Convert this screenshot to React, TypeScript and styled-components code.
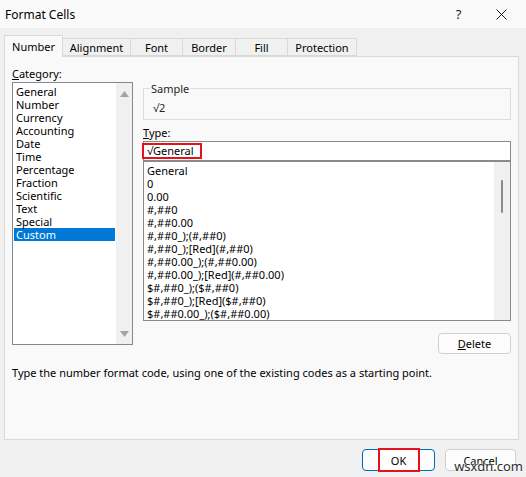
import styled, {createGlobalStyle} from "styled-components";

const GlobalStyle = createGlobalStyle`
    html, body {
        margin: 0;
        padding: 0;
        background: #f0f0f0;
    }
`

const categories = [
    'General', 'Number', 'Currency', 'Accounting', 'Date', 'Time',
    'Percentage', 'Fraction', 'Scientific', 'Text', 'Special', 'Custom',
]

const formats = [
    'General',
    '0',
    '0.00',
    '#,##0',
    '#,##0.00',
    '#,##0_);(#,##0)',
    '#,##0_);[Red](#,##0)',
    '#,##0.00_);(#,##0.00)',
    '#,##0.00_);[Red](#,##0.00)',
    '$#,##0_);($#,##0)',
    '$#,##0_);[Red]($#,##0)',
    '$#,##0.00_);($#,##0.00)',
]

const tabs = [
    {name: 'Number', width: 59},
    {name: 'Alignment', width: 69},
    {name: 'Font', width: 53},
    {name: 'Border', width: 54},
    {name: 'Fill', width: 53},
    {name: 'Protection', width: 70},
]

const Arrow = ({down}: { down?: boolean }) => (
    <svg width="9" height="6" viewBox="0 0 9 6">
        <path d={down ? 'M0 0 L9 0 L4.5 6 Z' : 'M0 6 L9 6 L4.5 0 Z'} fill="#a3a3a3"/>
    </svg>
)

const App = () => {
    return (
        <>
            <GlobalStyle/>
            <Window>
                <TitleBar>
                    <Title>Format Cells</Title>
                    <TitleButton>?</TitleButton>
                    <TitleButton>
                        <svg width="11" height="11" viewBox="0 0 11 11">
                            <path d="M0.5 0.5 L10.5 10.5 M10.5 0.5 L0.5 10.5" stroke="#1a1a1a" strokeWidth="1"/>
                        </svg>
                    </TitleButton>
                </TitleBar>

                <TabRow>
                    {tabs.map((t, i) => (
                        <Tab key={t.name} $active={i === 0} $width={t.width}>{t.name}</Tab>
                    ))}
                </TabRow>

                <Panel>
                    <TopRow>
                        <LeftCol>
                            <FieldLabel><u>C</u>ategory:</FieldLabel>
                            <CategoryBox>
                                <Items>
                                    {categories.map(c => (
                                        <Item key={c} $selected={c === 'Custom'}>{c}</Item>
                                    ))}
                                </Items>
                                <ScrollTrack>
                                    <Arrow/>
                                    <Arrow down/>
                                </ScrollTrack>
                            </CategoryBox>
                        </LeftCol>

                        <RightCol>
                            <SampleGroup>
                                <SampleLegend>Sample</SampleLegend>
                                <SampleValue>√2</SampleValue>
                            </SampleGroup>
                            <TypeLabel><u>T</u>ype:</TypeLabel>
                            <TypeInput>
                                <InputText>√General</InputText>
                                <Highlight $width={60} $height={16} $left={-2} $top={1}/>
                            </TypeInput>
                            <FormatBox>
                                <Items>
                                    {formats.map((f, i) => (
                                        <FormatItem key={i}>{f}</FormatItem>
                                    ))}
                                </Items>
                                <FormatTrack>
                                    <Thumb/>
                                </FormatTrack>
                            </FormatBox>
                            <DeleteRow>
                                <Button $width={73} $height={21}><u>D</u>elete</Button>
                            </DeleteRow>
                        </RightCol>
                    </TopRow>
                    <Description>
                        Type the number format code, using one of the existing codes as a starting point.
                    </Description>
                </Panel>

                <Footer>
                    <Button $width={73} $height={22} $primary>
                        OK
                        <Highlight $width={42} $height={24} $left={15} $top={-2}/>
                    </Button>
                    <Button $width={71} $height={22}>Cancel</Button>
                    <Watermark>wsxdn.com</Watermark>
                </Footer>
            </Window>
        </>
    );
};

export default App;

const Window = styled.div`
    position: relative;
    width: 526px;
    height: 477px;
    overflow: hidden;
    display: flex;
    flex-direction: column;
    background: #f0f0f0;
    font-family: "Noto Sans", "Open Sans", sans-serif;
    font-size: 11px;
    color: #000000;
`

const TitleBar = styled.div`
    display: flex;
    align-items: center;
    height: 28px;
    padding-left: 5px;
    background: #fafafa;
`

const Title = styled.div`
    flex-grow: 1;
    font-size: 12px;
`

const TitleButton = styled.div`
    display: flex;
    align-items: center;
    justify-content: center;
    width: 43px;
    height: 28px;
    font-size: 13px;
    color: #1a1a1a;
    &:last-child {
        margin-right: 3px;
    }
`

const TabRow = styled.div`
    display: flex;
    align-items: flex-end;
    height: 21px;
    margin-top: 7px;
    padding-left: 4px;
    position: relative;
    z-index: 1;
`

const Tab = styled.div<{ $active?: boolean; $width: number }>`
    display: flex;
    align-items: center;
    justify-content: center;
    box-sizing: border-box;
    width: ${p => p.$width}px;
    height: ${p => p.$active ? 22 : 18}px;
    margin-left: -1px;
    margin-bottom: ${p => p.$active ? -1 : 0}px;
    padding-bottom: ${p => p.$active ? 1 : 0}px;
    background: ${p => p.$active ? '#f9f9f9' : '#f0f0f0'};
    border: 1px solid #d9d9d9;
    border-bottom: ${p => p.$active ? 'none' : '1px solid #d9d9d9'};
    &:first-child {
        margin-left: 0;
    }
`

const Panel = styled.div`
    box-sizing: border-box;
    height: 384px;
    margin: 0 7px 0 4px;
    padding: 9px 7px 0;
    background: #f9f9f9;
    border: 1px solid #dadada;
`

const TopRow = styled.div`
    display: flex;
    gap: 10px;
`

const LeftCol = styled.div`
    display: flex;
    flex-direction: column;
    width: 121px;
`

const RightCol = styled.div`
    display: flex;
    flex-direction: column;
    flex-grow: 1;
    padding-top: 16px;
`

const FieldLabel = styled.div`
    height: 16px;
    line-height: 16px;
    u {
        text-decoration-thickness: 1px;
    }
`

const CategoryBox = styled.div`
    box-sizing: border-box;
    display: flex;
    height: 263px;
    background: #ffffff;
    border: 1px solid #828790;
`

const Items = styled.div`
    flex-grow: 1;
    padding: 2px 1px 0;
    overflow: hidden;
`

const Item = styled.div<{ $selected?: boolean }>`
    height: 13px;
    line-height: 13px;
    padding-left: 2px;
    white-space: nowrap;
    background: ${p => p.$selected ? '#0078d7' : 'transparent'};
    color: ${p => p.$selected ? '#ffffff' : '#000000'};
`

const ScrollTrack = styled.div`
    display: flex;
    flex-direction: column;
    align-items: center;
    justify-content: space-between;
    width: 16px;
    padding: 8px 0 7px;
    box-sizing: border-box;
    background: #f0f0f0;
`

const SampleGroup = styled.fieldset`
    box-sizing: border-box;
    height: 38px;
    margin: 0;
    padding: 6px 8px 0 9px;
    border: 1px solid #dcdcdc;
`

const SampleLegend = styled.legend`
    margin-left: -3px;
    padding: 0 1px;
    line-height: 13px;
    color: #262626;
`

const SampleValue = styled.div`
    line-height: 14px;
    color: #262626;
`

const TypeLabel = styled(FieldLabel)`
    margin-top: 5px;
`

const TypeInput = styled.div`
    position: relative;
    box-sizing: border-box;
    display: flex;
    align-items: center;
    height: 20px;
    padding-left: 3px;
    background: #ffffff;
    border: 1px solid #8a8a8a;
`

const InputText = styled.span`
    line-height: 14px;
`

const Highlight = styled.span<{ $width: number; $height: number; $left: number; $top: number }>`
    position: absolute;
    left: ${p => p.$left}px;
    top: ${p => p.$top}px;
    width: ${p => p.$width}px;
    height: ${p => p.$height}px;
    box-sizing: border-box;
    border: 2px solid #e3121c;
    pointer-events: none;
`

const FormatBox = styled.div`
    box-sizing: border-box;
    display: flex;
    height: 160px;
    background: #ffffff;
    border: 1px solid #8a8a8a;
`

const FormatItem = styled.div`
    height: 13px;
    line-height: 13px;
    padding-left: 2px;
    white-space: nowrap;
`

const FormatTrack = styled.div`
    display: flex;
    justify-content: center;
    width: 16px;
    padding-top: 18px;
    box-sizing: border-box;
    background: #f0f0f0;
`

const Thumb = styled.div`
    width: 2px;
    height: 33px;
    border-radius: 1px;
    background: #8a8a8a;
`

const DeleteRow = styled.div`
    display: flex;
    justify-content: flex-end;
    margin-top: 12px;
`

const Button = styled.div<{ $width: number; $height: number; $primary?: boolean }>`
    position: relative;
    box-sizing: border-box;
    display: flex;
    align-items: center;
    justify-content: center;
    width: ${p => p.$width}px;
    height: ${p => p.$height}px;
    background: #fdfdfd;
    border: 1px solid ${p => p.$primary ? '#0067c0' : '#d0d0d0'};
    border-radius: 4px;
`

const Description = styled.div`
    margin-top: 11px;
    line-height: 16px;
    white-space: nowrap;
`

const Footer = styled.div`
    position: relative;
    display: flex;
    justify-content: flex-end;
    gap: 10px;
    margin-top: 9px;
    padding-right: 10px;
`

const Watermark = styled.div`
    position: absolute;
    right: 3px;
    top: 8px;
    font-size: 13px;
    color: #2e2e2e;
    text-shadow: 0 0 2px #ffffff, 0 0 2px #ffffff;
    pointer-events: none;
`
